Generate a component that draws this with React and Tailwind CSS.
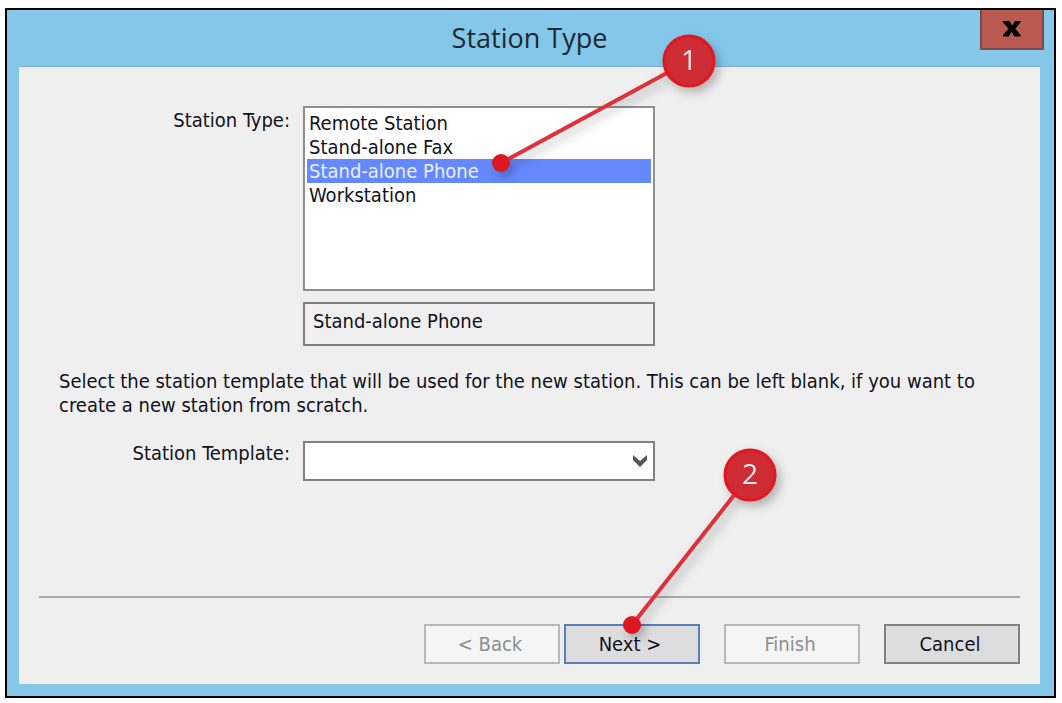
import { useState } from 'react'

const stationTypes = ['Remote Station', 'Stand-alone Fax', 'Stand-alone Phone', 'Workstation']

function WizardButton({ children, disabled, primary }) {
  const look = disabled
    ? 'border-[#b8b8b8] bg-[#f5f5f5] text-[#8e8e8e]'
    : primary
      ? 'border-[#5a80b8] bg-[#dddddd] text-[#12121c]'
      : 'border-[#808080] bg-[#dddddd] text-[#12121c]'
  return (
    <button type="button" disabled={disabled} className={`h-10 w-[136px] border-2 pr-1 text-[20px] leading-6 ${look}`}>
      {children}
    </button>
  )
}

// Numbered pin: (x1, y1) is the tip, (cx, cy) the numbered disc
function Callout({ number, width, height, x1, y1, cx, cy, className }) {
  return (
    <svg
      width={width}
      height={height}
      viewBox={`0 0 ${width} ${height}`}
      className={`pointer-events-none absolute max-w-none drop-shadow-[4px_5px_5px_rgba(0,0,0,0.25)] ${className}`}
    >
      <line x1={x1} y1={y1} x2={cx} y2={cy} stroke="#e0303a" strokeWidth="4" />
      <circle cx={x1} cy={y1} r="9" fill="#dd1822" />
      <circle cx={cx} cy={cy} r="25" fill="#cd2c35" stroke="#e01822" strokeWidth="3" />
      <text x={cx} y={cy + 9} textAnchor="middle" fontSize="28" fill="#ffe9e6" fontFamily="Open Sans, sans-serif">
        {number}
      </text>
    </svg>
  )
}

export default function App() {
  const [stationType, setStationType] = useState('Stand-alone Phone')
  const [template, setTemplate] = useState('')

  return (
    <div className="flex min-h-screen flex-col bg-white pt-2 pr-[6px] pb-[5px] pl-[5px] font-['DejaVu_Sans_Condensed','DejaVu_Sans',sans-serif] text-[20px] leading-6 text-[#12121c]">
      <div className="flex flex-1 flex-col border-2 border-black bg-[#84c7e8] pr-[14px] pb-3 pl-3">
        {/* Title bar */}
        <header className="grid h-14 grid-cols-[1fr_auto_1fr]">
          <h1 className="col-start-2 self-center font-['Open_Sans',sans-serif] text-[27px] leading-8 text-[#1c2a33]">
            Station Type
          </h1>
          <button
            type="button"
            aria-label="Close"
            className="-mr-1 flex h-10 w-16 items-center justify-center justify-self-end border-2 border-t-0 border-[#7c4a4c] bg-[#b9594f]"
          >
            <svg width="18" height="16" viewBox="0 0 18 16" fill="#000">
              <path d="M0 0H6.500L9.200 4.500L12 0H17.500V1.500L12.300 7.700L17.500 14V15.500H11.500L8.600 11L5.800 15.500H0V14L5.500 7.700L0 1.500Z" />
            </svg>
          </button>
        </header>

        <main className="flex flex-1 flex-col border-t border-[#7fb0d8] bg-[#efefef] px-5 pt-[39px] pb-5">
          <div className="grid grid-cols-[231px_352px] gap-x-[13px] pl-5">
            <label htmlFor="station-type" className="pt-0.5 text-right">Station Type:</label>
            <div className="relative">
              <select
                id="station-type"
                size={4}
                value={stationType}
                onChange={(e) => setStationType(e.target.value)}
                className="block h-[185px] w-full overflow-hidden border-2 border-[#909090] bg-white px-0.5 py-[3px] outline-none"
              >
                {stationTypes.map((t) => (
                  <option
                    key={t}
                    value={t}
                    className="h-6 px-0.5 py-0 checked:bg-[linear-gradient(#6688ff,#6688ff)] checked:[-webkit-text-fill-color:#e6f0ff]"
                  >
                    {t}
                  </option>
                ))}
              </select>
              <Callout number={1} width={240} height={160} x1={11} y1={134} cx={199} cy={32} className="-top-[77px] left-[187px] z-10" />
            </div>
            <input
              aria-label="Selected station type"
              readOnly
              value={stationType}
              className="col-start-2 mt-[11px] h-11 border-2 border-[#808080] bg-[#efefef] px-2 pb-1.5 outline-none"
            />
          </div>

          <p className="mt-[23px] mr-4 mb-6 ml-5">
            Select the station template that will be used for the new station. This can be left blank, if you want to create a new station from scratch.
          </p>

          <div className="grid grid-cols-[231px_352px] gap-x-[13px] pl-5">
            <label htmlFor="station-template" className="text-right">Station Template:</label>
            <div className="relative">
              <select
                id="station-template"
                value={template}
                onChange={(e) => setTemplate(e.target.value)}
                className="block h-10 w-full appearance-none border-2 border-[#808080] bg-white px-2 outline-none"
              >
                <option value=""></option>
              </select>
              <svg width="14" height="12" viewBox="0 0 14 12" fill="#555" className="pointer-events-none absolute top-[14px] right-2">
                <path d="M0 0L7 6L14 0V5L7 12L0 5Z" />
              </svg>
            </div>
          </div>

          {/* Wizard navigation */}
          <footer className="mt-auto flex justify-end gap-6 border-t-2 border-[#aaaaaa] pt-[26px]">
            <div className="flex gap-1">
              <WizardButton disabled>&lt; Back</WizardButton>
              <div className="relative">
                <WizardButton primary>Next &gt;</WizardButton>
                <Callout number={2} width={180} height={210} x1={17} y1={185} cx={135} cy={35} className="-top-[184px] left-[51px] z-10" />
              </div>
            </div>
            <WizardButton disabled>Finish</WizardButton>
            <WizardButton>Cancel</WizardButton>
          </footer>
        </main>
      </div>
    </div>
  )
}
